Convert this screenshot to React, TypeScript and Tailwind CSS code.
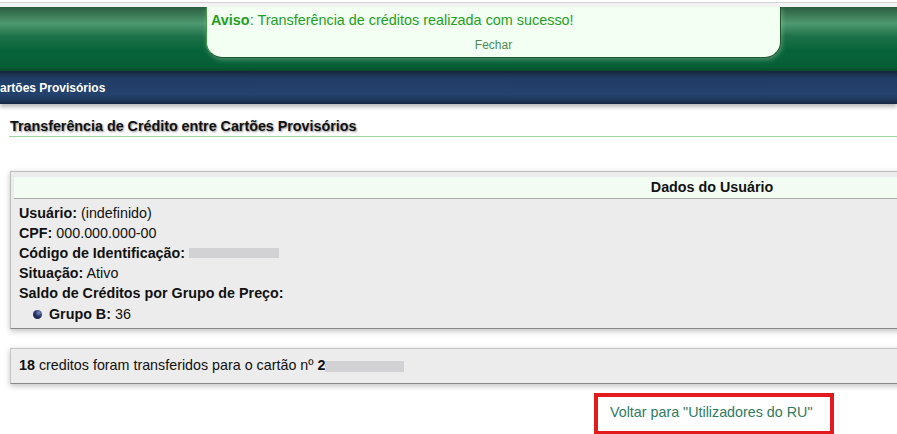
const rows = [
    { label: "Usuário:", value: "(indefinido)" },
    { label: "CPF:", value: "000.000.000-00" },
];

export default function App() {
    return (
        <div className="w-[897px] h-[434px] overflow-hidden bg-white font-['Liberation_Sans',Arial,sans-serif] text-[#111]">
            {/* top strip */}
            <div className="h-[2px] bg-white" />
            <div className="h-px bg-[#d2d2d2]" />
            <div className="h-[4px] bg-[#f3f3f3]" />

            {/* green header with notice */}
            <div className="h-[64px] bg-[linear-gradient(to_bottom,#2b5d40_0%,#4f9a70_26%,#1d7148_46%,#07643a_68%,#065d36_94%,#0c4b2c_100%)]">
                <div className="ml-[206px] w-[575px] h-[51px] bg-[#f4fff4] border border-t-0 border-[#1d5a2c] border-l-[#3f9a4a] rounded-b-[16px] shadow-[1px_2px_5px_rgba(200,230,200,0.35)] flex flex-col items-stretch">
                    <div className="pl-[4px] pt-[5px] text-[14.4px] leading-[16px] text-[#1fa01f]">
                        <b>Aviso</b>: Transferência de créditos realizada com sucesso!
                    </div>
                    <div className="mt-[10px] text-center text-[12px] leading-[14px] text-[#4e8a50]">Fechar</div>
                </div>
            </div>

            {/* blue bar */}
            <div className="relative h-[33px] flex items-center bg-[linear-gradient(to_bottom,#14263b_0%,#213d66_22%,#24426e_70%,#1f3558_90%,#172640_100%)] shadow-[0_3px_4px_rgba(0,0,0,0.28)]">
                <span className="text-white font-bold text-[12px] leading-[14px]">artões Provisórios</span>
            </div>

            {/* title */}
            <div className="pt-[14px] pl-[9px]">
                <div className="pl-px pb-[1px] border-b border-[#9fd49f] font-bold text-[14.3px] leading-[17px] [text-shadow:1px_1px_2px_rgba(0,0,0,0.45)]">
                    Transferência de Crédito entre Cartões Provisórios
                </div>
            </div>

            {/* user data */}
            <div className="mt-[34px] ml-[10px] w-[1404px] border border-[#bdbdbd] border-b-[#888] bg-[#ececec] shadow-[0_2px_6px_rgba(0,0,0,0.25)] pt-[5px] px-[3px] pb-[3px] text-[14.3px]">
                <div className="h-[22px] flex items-center justify-center bg-[#f3fcf3] border-b border-[#a9a9a9] font-bold">
                    Dados do Usuário
                </div>
                <div className="pt-[4px] pl-[5px] leading-[20px]">
                    {rows.map((r) => (
                        <div key={r.label}>
                            <b>{r.label}</b> {r.value}
                        </div>
                    ))}
                    <div className="flex items-center">
                        <b>Código de Identificação:</b>
                        <span className="ml-[4px] inline-block w-[90px] h-[10px] bg-[#d2d2d4]" />
                    </div>
                    <div>
                        <b>Situação:</b> Ativo
                    </div>
                    <div className="leading-[21px]">
                        <b>Saldo de Créditos por Grupo de Preço:</b>
                    </div>
                    <div className="flex items-center pl-[14px] leading-[21px]">
                        <span className="w-[9px] h-[9px] rounded-full bg-[radial-gradient(circle_at_65%_30%,#7d8fc0_0%,#243466_45%,#0e1630_100%)] mr-[7px]" />
                        <b>Grupo B:</b>&nbsp;36
                    </div>
                </div>
            </div>

            {/* result */}
            <div className="mt-[19px] ml-[10px] w-[1404px] h-[36px] flex items-center pl-[8px] border border-[#c4c4c4] border-b-[#888] bg-[#ececec] shadow-[0_2px_6px_rgba(0,0,0,0.25)] text-[14.3px]">
                <b>18</b>&nbsp;creditos foram transferidos para o cartão nº&nbsp;<b>2</b>
                <span className="inline-block w-[79px] h-[11px] bg-[#d2d2d4]" />
            </div>

            {/* back link */}
            <div className="mt-[9px] ml-[594px] w-[240px] h-[42px] border-[4px] border-[#e31b1e] flex items-center pl-[12px] pb-[2px] text-[14.3px] text-[#2f7a5c]">
                Voltar para "Utilizadores do RU"
            </div>
        </div>
    );
}
